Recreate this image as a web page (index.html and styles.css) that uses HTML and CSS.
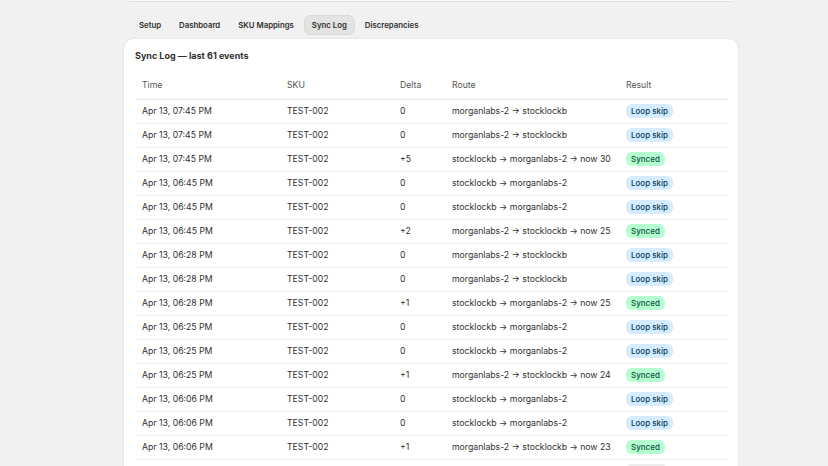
FILE: index.html
```html
<html>
<head>
  <title>Sync Log</title>
  <link rel="stylesheet" href="styles.css">
</head>
<body>
  <div class="page">
    <div class="top-strip"></div>
    <nav class="tabs">
      <a class="tab">Setup</a>
      <a class="tab">Dashboard</a>
      <a class="tab">SKU Mappings</a>
      <a class="tab active">Sync Log</a>
      <a class="tab">Discrepancies</a>
    </nav>
    <div class="card">
      <h2>Sync Log — last 61 events</h2>
      <table class="log">
        <thead>
          <tr><th class="c-time">Time</th><th class="c-sku">SKU</th><th class="c-delta">Delta</th><th class="c-route">Route</th><th>Result</th></tr>
        </thead>
        <tbody>
          <tr><td>Apr 13, 07:45 PM</td><td>TEST-002</td><td>0</td><td>morganlabs-2 → stocklockb</td><td><span class="badge skip">Loop skip</span></td></tr>
          <tr><td>Apr 13, 07:45 PM</td><td>TEST-002</td><td>0</td><td>morganlabs-2 → stocklockb</td><td><span class="badge skip">Loop skip</span></td></tr>
          <tr><td>Apr 13, 07:45 PM</td><td>TEST-002</td><td>+5</td><td>stocklockb → morganlabs-2 → now 30</td><td><span class="badge synced">Synced</span></td></tr>
          <tr><td>Apr 13, 06:45 PM</td><td>TEST-002</td><td>0</td><td>stocklockb → morganlabs-2</td><td><span class="badge skip">Loop skip</span></td></tr>
          <tr><td>Apr 13, 06:45 PM</td><td>TEST-002</td><td>0</td><td>stocklockb → morganlabs-2</td><td><span class="badge skip">Loop skip</span></td></tr>
          <tr><td>Apr 13, 06:45 PM</td><td>TEST-002</td><td>+2</td><td>morganlabs-2 → stocklockb → now 25</td><td><span class="badge synced">Synced</span></td></tr>
          <tr><td>Apr 13, 06:28 PM</td><td>TEST-002</td><td>0</td><td>morganlabs-2 → stocklockb</td><td><span class="badge skip">Loop skip</span></td></tr>
          <tr><td>Apr 13, 06:28 PM</td><td>TEST-002</td><td>0</td><td>morganlabs-2 → stocklockb</td><td><span class="badge skip">Loop skip</span></td></tr>
          <tr><td>Apr 13, 06:28 PM</td><td>TEST-002</td><td>+1</td><td>stocklockb → morganlabs-2 → now 25</td><td><span class="badge synced">Synced</span></td></tr>
          <tr><td>Apr 13, 06:25 PM</td><td>TEST-002</td><td>0</td><td>stocklockb → morganlabs-2</td><td><span class="badge skip">Loop skip</span></td></tr>
          <tr><td>Apr 13, 06:25 PM</td><td>TEST-002</td><td>0</td><td>stocklockb → morganlabs-2</td><td><span class="badge skip">Loop skip</span></td></tr>
          <tr><td>Apr 13, 06:25 PM</td><td>TEST-002</td><td>+1</td><td>morganlabs-2 → stocklockb → now 24</td><td><span class="badge synced">Synced</span></td></tr>
          <tr><td>Apr 13, 06:06 PM</td><td>TEST-002</td><td>0</td><td>stocklockb → morganlabs-2</td><td><span class="badge skip">Loop skip</span></td></tr>
          <tr><td>Apr 13, 06:06 PM</td><td>TEST-002</td><td>0</td><td>stocklockb → morganlabs-2</td><td><span class="badge skip">Loop skip</span></td></tr>
          <tr><td>Apr 13, 06:06 PM</td><td>TEST-002</td><td>+1</td><td>morganlabs-2 → stocklockb → now 23</td><td><span class="badge synced">Synced</span></td></tr>
          <tr><td></td><td></td><td></td><td></td><td><span class="badge muted">Skipped</span></td></tr>
        </tbody>
      </table>
    </div>
  </div>
</body>
</html>
```

FILE: styles.css
```css
body {
  margin: 0;
  background-color: #f1f1f1;
  font-family: Inter, "Noto Sans", sans-serif;
  color: #303030;
  height: 466px;
  overflow: hidden;
}

.page {
  width: 614px;
  margin-left: 124px;
}

.top-strip {
  height: 1px;
  margin: 0 6px 0 5px;
  background-color: #fafafa;
  border-bottom: 1px solid #e0e0e0;
}

.tabs {
  display: flex;
  gap: 2px;
  padding: 13px 0 4px 7px;
}

.tab {
  font-size: 7.8px;
  font-weight: 600;
  padding: 4px 7px;
  border-radius: 7px;
  border: 1px dotted transparent;
  line-height: 10px;
}

.tab.active {
  background-color: #e3e3e3;
  border-color: #cfcfcf;
}

.card {
  background-color: #fff;
  border-radius: 10px;
  box-shadow: 0 1px 0 rgba(0, 0, 0, 0.06), 0 0 0 1px rgba(0, 0, 0, 0.03);
  padding: 11px 10px 0 11px;
}

h2 {
  margin: 0 0 9px 0;
  font-size: 9px;
  font-weight: 700;
  line-height: 12px;
}

.log {
  width: 100%;
  table-layout: fixed;
  border-collapse: collapse;
  font-size: 8.7px;
  white-space: nowrap;
}

.log th {
  text-align: left;
  font-weight: 400;
  color: #555;
  height: 28px;
  padding: 0 7px;
  border-bottom: 1px solid #e6e6e6;
}

.log td {
  height: 24px;
  padding: 0 7px;
  border-bottom: 1px solid #efefef;
}

.c-time { width: 131px; }
.c-sku { width: 99px; }
.c-delta { width: 38px; }
.c-route { width: 160px; }

.badge {
  display: inline-block;
  font-size: 8px;
  font-weight: 500;
  line-height: 14px;
  padding: 0 5px;
  border-radius: 6px;
}

.badge.skip {
  background-color: #d5ebff;
  color: #003a5a;
}

.badge.synced {
  background-color: #b4fed2;
  color: #0c5132;
}

.badge.muted {
  background-color: #ececec;
  color: #4a4a4a;
}
```
